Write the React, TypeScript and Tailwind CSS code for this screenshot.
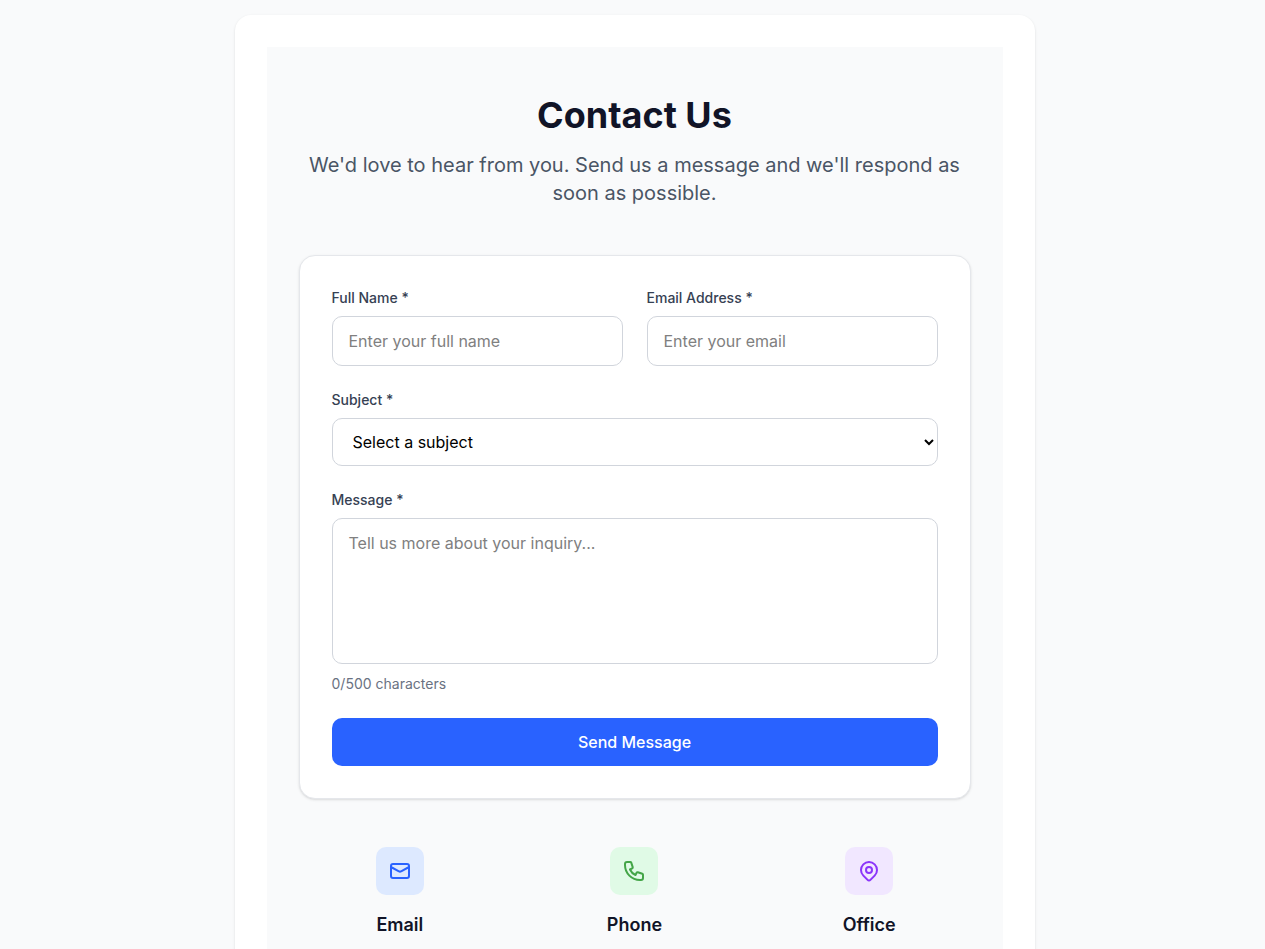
import { useState } from 'react';
import type { ReactNode } from 'react';

const MAX_MESSAGE = 500;

const labelClass = 'mb-2 block text-sm font-medium text-gray-700';
const fieldClass =
  'block w-full rounded-[10px] border border-gray-300 bg-white px-4 py-3 text-base placeholder:text-[#808080] focus:border-blue-500 focus:outline-none focus:ring-2 focus:ring-blue-500';

interface ContactMethodProps {
  title: string;
  tileClass: string;
  children: ReactNode;
}

function ContactMethod({ title, tileClass, children }: ContactMethodProps) {
  return (
    <div className="text-center">
      <div
        className={`mx-auto mb-4 flex h-12 w-12 items-center justify-center rounded-[10px] ${tileClass}`}
      >
        <svg
          className="h-6 w-6"
          fill="none"
          stroke="currentColor"
          strokeWidth={2}
          strokeLinecap="round"
          strokeLinejoin="round"
          viewBox="0 0 24 24"
          aria-hidden="true"
        >
          {children}
        </svg>
      </div>
      <h3 className="text-lg font-semibold text-[#111427]">{title}</h3>
    </div>
  );
}

export default function App() {
  const [message, setMessage] = useState('');

  return (
    <div className="min-h-screen bg-gray-50 pt-[15px] pr-4 pl-5 font-['Inter',sans-serif] text-black">
      <div className="mx-auto max-w-[800px] rounded-2xl bg-white p-8 shadow-sm">
        <main className="bg-gray-50 px-8 py-12">
          {/* Header */}
          <div className="mb-12 text-center">
            <h1 className="mb-4 text-4xl font-bold text-[#111427]">Contact Us</h1>
            <p className="text-xl text-gray-600">
              We'd love to hear from you. Send us a message and we'll respond as soon as possible.
            </p>
          </div>

          {/* Form */}
          <form
            onSubmit={(e) => e.preventDefault()}
            className="space-y-6 rounded-2xl border border-gray-200 bg-white p-8 shadow-sm"
          >
            <div className="grid grid-cols-1 gap-6 md:grid-cols-2">
              <div>
                <label htmlFor="name" className={labelClass}>
                  Full Name *
                </label>
                <input id="name" type="text" placeholder="Enter your full name" className={fieldClass} />
              </div>
              <div>
                <label htmlFor="email" className={labelClass}>
                  Email Address *
                </label>
                <input id="email" type="email" placeholder="Enter your email" className={fieldClass} />
              </div>
            </div>

            <div>
              <label htmlFor="subject" className={labelClass}>
                Subject *
              </label>
              <select id="subject" className={fieldClass}>
                <option value="">Select a subject</option>
              </select>
            </div>

            <div>
              <label htmlFor="message" className={labelClass}>
                Message *
              </label>
              <textarea
                id="message"
                rows={5}
                maxLength={MAX_MESSAGE}
                value={message}
                onChange={(e) => setMessage(e.target.value)}
                placeholder="Tell us more about your inquiry..."
                className={`${fieldClass} resize-none`}
              />
              <p className="mt-2.5 text-sm text-gray-500">
                {message.length}/{MAX_MESSAGE} characters
              </p>
            </div>

            <button
              type="submit"
              className="block w-full rounded-[10px] bg-[#2962ff] px-6 py-3 font-medium text-white hover:bg-blue-700"
            >
              Send Message
            </button>
          </form>

          {/* Contact methods */}
          <div className="mt-12 grid grid-cols-1 gap-8 md:grid-cols-3">
            <ContactMethod title="Email" tileClass="bg-[#dde9ff] text-[#2962ff]">
              <path d="M3 8l7.89 4.26a2 2 0 002.22 0L21 8M5 19h14a2 2 0 002-2V7a2 2 0 00-2-2H5a2 2 0 00-2 2v10a2 2 0 002 2z" />
            </ContactMethod>
            <ContactMethod title="Phone" tileClass="bg-[#e0fae6] text-[#43a547]">
              <path d="M3 5a2 2 0 012-2h3.28a1 1 0 01.948.684l1.498 4.493a1 1 0 01-.502 1.21l-2.257 1.13a11.042 11.042 0 005.516 5.516l1.13-2.257a1 1 0 011.21-.502l4.493 1.498a1 1 0 01.684.949V19a2 2 0 01-2 2h-1C9.716 21 3 14.284 3 6V5z" />
            </ContactMethod>
            <ContactMethod title="Office" tileClass="bg-[#f1e7ff] text-[#8b35fa]">
              <path d="M17.657 16.657L13.414 20.9a1.998 1.998 0 01-2.827 0l-4.244-4.243a8 8 0 1111.314 0z" />
              <path d="M15 11a3 3 0 11-6 0 3 3 0 016 0z" />
            </ContactMethod>
          </div>
        </main>
      </div>
    </div>
  );
}
